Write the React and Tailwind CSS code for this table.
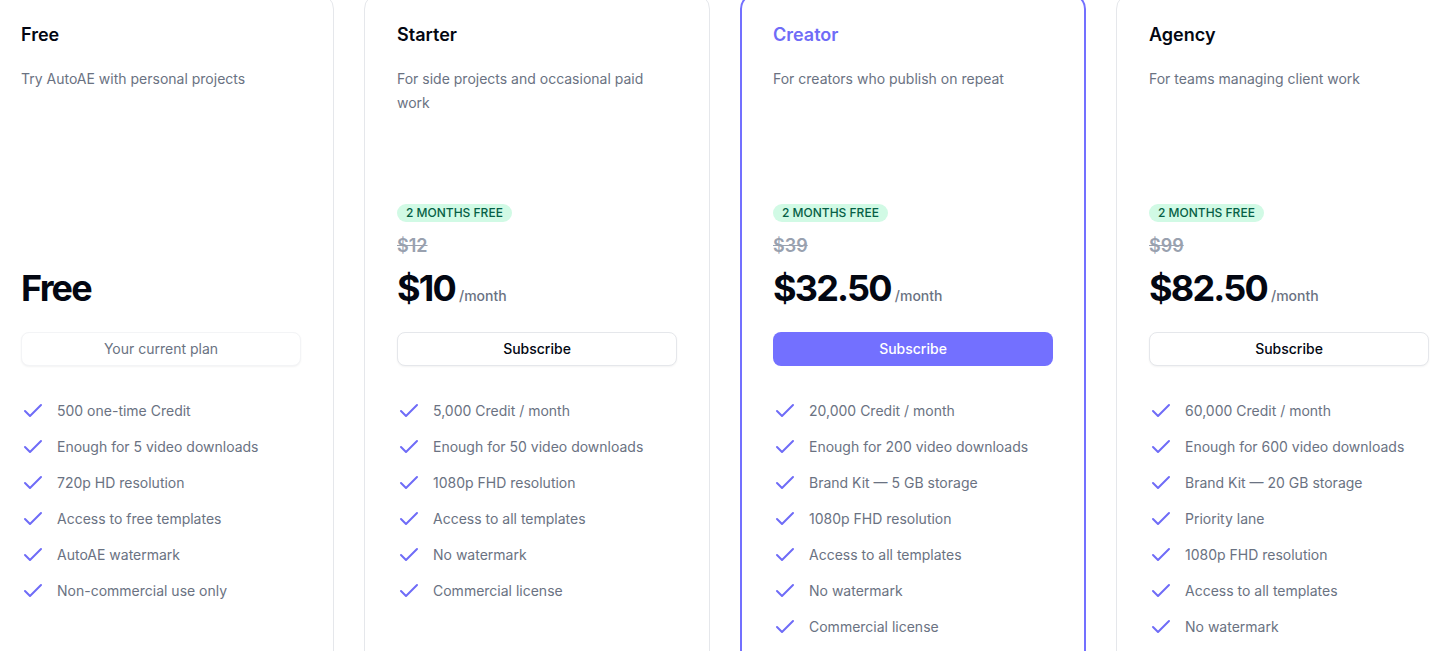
import { Check } from 'lucide-react';

const plans = [
  {
    name: 'Free',
    description: 'Try AutoAE with personal projects',
    price: 'Free',
    current: true,
    features: [
      '500 one-time Credit',
      'Enough for 5 video downloads',
      '720p HD resolution',
      'Access to free templates',
      'AutoAE watermark',
      'Non-commercial use only',
    ],
  },
  {
    name: 'Starter',
    description: 'For side projects and occasional paid work',
    oldPrice: '$12',
    price: '$10',
    features: [
      '5,000 Credit / month',
      'Enough for 50 video downloads',
      '1080p FHD resolution',
      'Access to all templates',
      'No watermark',
      'Commercial license',
    ],
  },
  {
    name: 'Creator',
    description: 'For creators who publish on repeat',
    oldPrice: '$39',
    price: '$32.50',
    highlight: true,
    features: [
      '20,000 Credit / month',
      'Enough for 200 video downloads',
      'Brand Kit — 5 GB storage',
      '1080p FHD resolution',
      'Access to all templates',
      'No watermark',
      'Commercial license',
    ],
  },
  {
    name: 'Agency',
    description: 'For teams managing client work',
    oldPrice: '$99',
    price: '$82.50',
    features: [
      '60,000 Credit / month',
      'Enough for 600 video downloads',
      'Brand Kit — 20 GB storage',
      'Priority lane',
      '1080p FHD resolution',
      'Access to all templates',
      'No watermark',
    ],
  },
];

function PlanCard({ plan }) {
  return (
    <div
      className={
        plan.highlight
          ? 'w-[346px] shrink-0 rounded-2xl border-2 border-[#7370ff] bg-white px-[31px] pt-[26px] pb-8'
          : 'w-[346px] shrink-0 rounded-2xl border border-gray-200 bg-white px-8 pt-[27px] pb-8'
      }
    >
      <div className="flex h-[287px] flex-col">
        <h3
          className={
            plan.highlight
              ? 'text-lg leading-7 font-semibold text-[#6f6cf7]'
              : 'text-lg leading-7 font-semibold text-gray-950'
          }
        >
          {plan.name}
        </h3>
        <p className="mt-[18px] text-sm leading-6 text-gray-500">{plan.description}</p>

        <div className="mt-auto">
          {plan.oldPrice && (
            <>
              <span className="inline-block h-[18px] rounded-full bg-[#d1fae5] px-[9px] text-xs leading-[18px] font-medium text-[#065f46]">
                2 MONTHS FREE
              </span>
              <div className="mt-[9px] text-lg leading-7 font-semibold text-gray-400 line-through">
                {plan.oldPrice}
              </div>
            </>
          )}
          <div className="mt-2 flex items-baseline">
            <span className="text-4xl leading-10 font-bold tracking-[-0.05em] text-gray-950">{plan.price}</span>
            {plan.oldPrice && (
              <span className="ml-1 text-sm font-medium text-gray-500">/month</span>
            )}
          </div>
        </div>
      </div>

      {plan.current ? (
        <button className="mt-6 flex h-[34px] w-full items-center justify-center rounded-lg border border-gray-100 bg-white text-sm text-gray-500 shadow-xs">
          Your current plan
        </button>
      ) : plan.highlight ? (
        <button className="mt-6 flex h-[34px] w-full items-center justify-center rounded-lg bg-[#7370ff] text-sm font-medium text-white">
          Subscribe
        </button>
      ) : (
        <button className="mt-6 flex h-[34px] w-full items-center justify-center rounded-lg border border-gray-200 bg-white text-sm font-medium text-gray-950 shadow-xs">
          Subscribe
        </button>
      )}

      <ul className="mt-[33px] flex flex-col gap-3">
        {plan.features.map((f) => (
          <li key={f} className="flex items-center gap-3 text-sm leading-5 text-gray-500">
            <Check size={24} strokeWidth={2} className="shrink-0 text-[#6f6cf7]" />
            <span>{f}</span>
          </li>
        ))}
      </ul>
    </div>
  );
}

export default function App() {
  return (
    <div
      className="h-[651px] w-full overflow-hidden bg-white"
      style={{ fontFamily: 'Inter, "Noto Sans", sans-serif' }}
    >
      <div className="-mt-[7px] -ml-[12px] flex gap-[30px]">
        {plans.map((p) => (
          <PlanCard key={p.name} plan={p} />
        ))}
      </div>
    </div>
  );
}
